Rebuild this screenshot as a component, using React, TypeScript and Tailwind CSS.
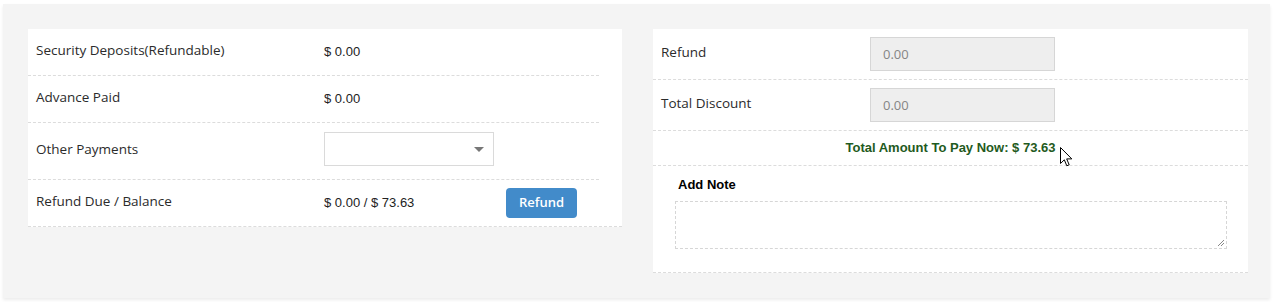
import React from "react";

const sans = "font-['Open_Sans',sans-serif]";
const arial = "font-['Liberation_Sans',Arial,sans-serif]";

function Cursor() {
  return (
    <svg className="absolute left-[407px] top-[16px]" width="13" height="20" viewBox="0 0 13 20">
      <path d="M0.5 0.5 L0.5 16.5 L4.3 12.8 L6.8 18.8 L9.2 17.8 L6.7 11.9 L11.8 11.9 Z" fill="#fff" stroke="#000" strokeWidth="1" strokeLinejoin="round" />
    </svg>
  );
}

export default function App() {
  const row = "flex items-center border-b border-dashed border-[#dcdcdc]";
  const label = `${sans} w-[296px] shrink-0 pl-2 pb-[4px] text-[13.5px] text-[#2b2b2b]`;
  const value = `${arial} text-[13px] text-[#222]`;

  return (
    <div className="bg-white pl-[3px] pr-[5px] pt-[4px] pb-[5px]">
      <div className="flex gap-[31px] bg-[#f4f4f4] pb-[25px] pl-[25px] pt-[25px] shadow-[0_2px_3px_rgba(0,0,0,0.08)]">
        {/* left card */}
        <div className="w-[594px] self-start border-b border-dashed border-[#dcdcdc] bg-white">
          <div className="w-[571px]">
            <div className={`${row} h-[47px]`}>
              <div className={label}>Security Deposits(Refundable)</div>
              <div className={value}>$ 0.00</div>
            </div>
            <div className={`${row} h-[47px]`}>
              <div className={label}>Advance Paid</div>
              <div className={value}>$ 0.00</div>
            </div>
            <div className={`${row} h-[57px]`}>
              <div className={label}>Other Payments</div>
              <div className="relative mb-[5px] flex h-[34px] w-[170px] items-center border border-[#dadada] bg-white">
                <span className="absolute right-[9px] top-[14px] h-0 w-0 border-x-[5px] border-t-[5px] border-x-transparent border-t-[#777]" />
              </div>
            </div>
            <div className="flex h-[46px] items-center">
              <div className={label}>Refund Due / Balance</div>
              <div className={`${value} w-[182px]`}>$ 0.00 / $ 73.63</div>
              <button className={`${sans} h-[30px] w-[71px] rounded-[4px] bg-[#428bca] text-[13px] font-semibold text-white`}>
                Refund
              </button>
            </div>
          </div>
        </div>

        {/* right card */}
        <div className="w-[595px] border-b border-dashed border-[#dcdcdc] bg-white">
          {[
            { name: "Refund", h: "h-[51px]" },
            { name: "Total Discount", h: "h-[51px]" },
          ].map((r) => (
            <div key={r.name} className={`${row} ${r.h}`}>
              <div className={`${sans} w-[217px] shrink-0 pl-2 pb-[4px] text-[13.5px] text-[#2b2b2b]`}>{r.name}</div>
              <div className={`${sans} flex h-[34px] w-[185px] items-center border border-[#d6d6d6] bg-[#eee] pl-[12px] pt-[2px] text-[13px] text-[#858585]`}>
                0.00
              </div>
            </div>
          ))}
          <div className={`${row} relative h-[35px] justify-center`}>
            <span className={`${arial} text-[13px] font-bold text-[#1f5a21]`}>Total Amount To Pay Now: $ 73.63</span>
            <Cursor />
          </div>
          <div className="pb-[23px] pl-[22px] pr-[21px] pt-[11px]">
            <div className={`${arial} mb-[8px] ml-[3px] text-[13px] font-bold leading-[16px] text-black`}>Add Note</div>
            <div className="relative h-[48px] w-full border border-dashed border-[#d6d6d6]">
              <svg className="absolute bottom-[1px] right-[1px]" width="8" height="8" viewBox="0 0 8 8">
                <path d="M7 1 L1 7 M7 4 L4 7" stroke="#888" strokeWidth="1" />
              </svg>
            </div>
          </div>
        </div>
      </div>
    </div>
  );
}
